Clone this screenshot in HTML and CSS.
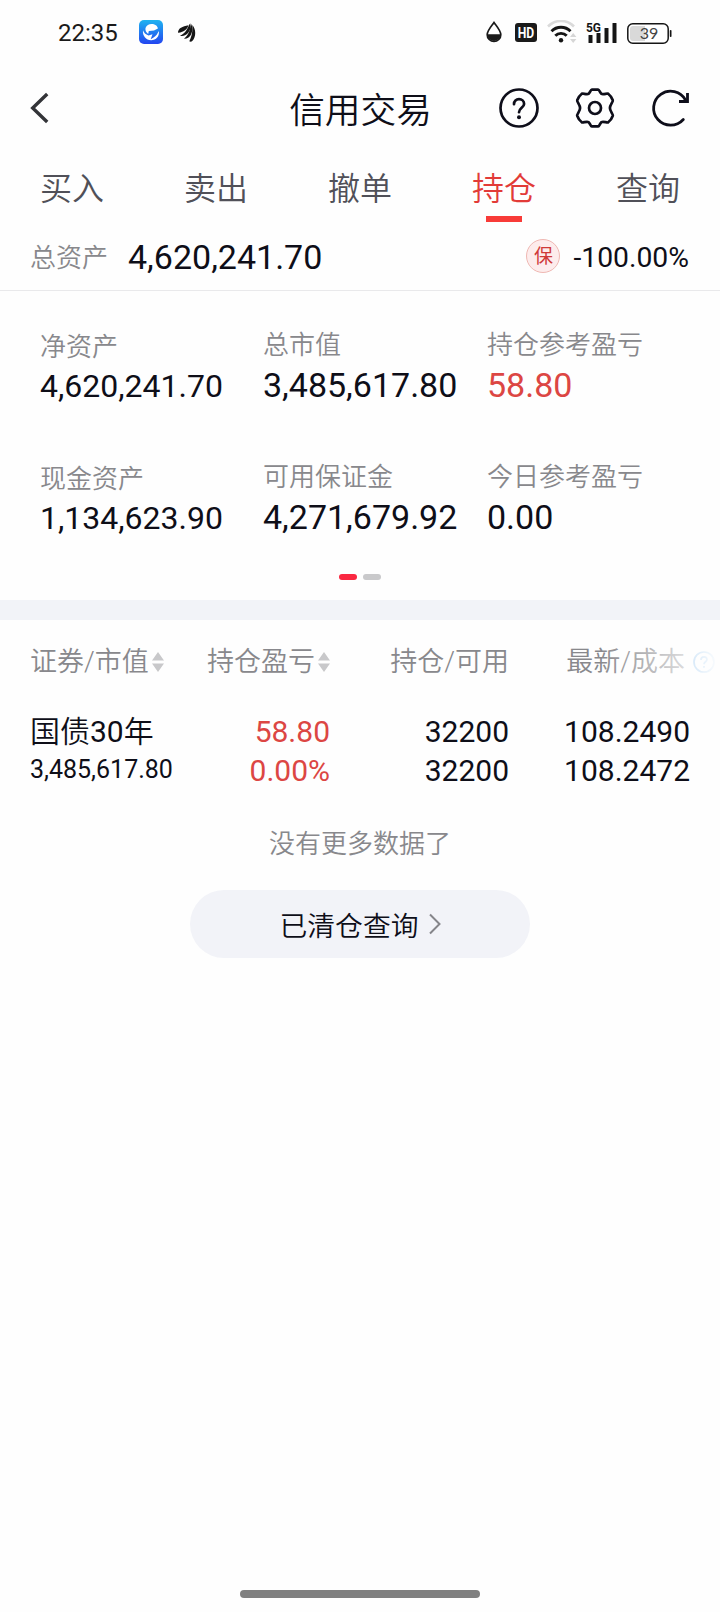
FILE: index.html
```html
<!DOCTYPE html>
<html lang="zh-CN">
<head>
<meta charset="utf-8">
<title>信用交易</title>
<link rel="stylesheet" href="styles.css">
</head>
<body>
<div class="phone">
  <div class="status">
    <span class="time">22:35</span>
    <svg class="app-icon" width="24" height="24" viewBox="0 0 24 24">
      <defs><linearGradient id="app" x1="0" y1="0" x2="0" y2="1"><stop offset="0" stop-color="#1fb4f0"/><stop offset="1" stop-color="#2345f0"/></linearGradient></defs>
      <rect width="24" height="24" rx="5" fill="url(#app)"/>
      <path d="M6.500 8C7.500 5.200 9.800 3.900 12.500 3.900c3.400 0 6 1.700 6.400 4.600L15 10.500l-5.200.6-.6 3C7.300 12.500 6 10.500 6.500 8z" fill="#fff"/>
      <path d="M4 10.300c.9 2.500 2.600 4.300 5.500 5.200l4-1.200-1.800 5 2.500-1.500c3-1.800 4.500-4.300 5.600-6.800 1 5-2.800 9.300-7.700 9.300C7 20.300 3.300 15.800 4 10.300z" fill="#fff"/>
    </svg>
    <svg class="wing-icon" width="18" height="19" viewBox="0 0 18 19" fill="#151515">
      <path d="M0 9.800C-.2 5.500 4 3.300 10.500 2.200 9.500 5.500 6.500 9 0 9.800z"/>
      <path d="M2 12.800C7.500 10.500 9.500 5.500 11.700.8c1.600 3 .5 7-2.200 9.800-2 2-4.500 3-7.500 2.200z"/>
      <path d="M6 15.800C10.500 12 12.500 7 12.700.3c2.400 3.700 2 8.200.1 11.700-1.500 2.500-3.800 4-6.800 3.800z"/>
      <path d="M11.300 18.300c2-4.300 3.600-9 3-16.300 4 4.500 3.700 11.500.2 15.800-.9.900-2.200 1.200-3.200.5z"/>
    </svg>
    <div class="status-right">
      <svg class="drop" width="16" height="22" viewBox="0 0 16 22">
        <path d="M8 1.500C5.500 5 1.200 9.500 1.200 13.700a6.800 6.800 0 0 0 13.600 0C14.800 9.500 10.500 5 8 1.500z" fill="#fff" stroke="#1a1a1a" stroke-width="1.700"/>
        <path d="M1.200 13.200h13.600a6.800 6.800 0 0 1-13.600 0z" fill="#1a1a1a"/>
      </svg>
      <svg class="hd" width="22" height="19" viewBox="0 0 22 19">
        <rect width="22" height="19" rx="3" fill="#1a1a1a"/>
        <text class="hd-text" x="11" y="14.500" text-anchor="middle" textLength="16.500" lengthAdjust="spacingAndGlyphs">HD</text>
      </svg>
      <svg class="wifi" width="30" height="24" viewBox="0 0 30 24" fill="none">
        <path d="M1 6.500a18 18 0 0 1 26 0" stroke="#dadada" stroke-width="2.600"/>
        <path d="M4.500 11.300a13.200 13.200 0 0 1 19 0M8.300 15.800a7.700 7.700 0 0 1 11.400 0" stroke="#151515" stroke-width="2.800"/>
        <circle cx="14" cy="20.200" r="2.200" fill="#151515"/>
        <path d="M23 17l3.200-4 3.200 4zM23 19h6.400l-3.200 4z" fill="#d6d6d6"/>
      </svg>
      <svg class="signal" width="31" height="23" viewBox="0 0 31 23" fill="#151515">
        <text class="g5-text" x="0" y="10.500" textLength="15" lengthAdjust="spacingAndGlyphs">5G</text>
        <rect x="2.500" y="14" width="4" height="8" rx=".5"/><rect x="10.500" y="12" width="4" height="10" rx=".5"/>
        <rect x="18.500" y="7" width="4" height="15" rx=".5"/><rect x="26.500" y="2" width="4" height="20" rx=".5"/>
      </svg>
      <svg class="battery" width="45" height="21" viewBox="0 0 45 21">
        <rect x=".8" y=".8" width="40.400" height="19.400" rx="5" fill="#fff" stroke="#151515" stroke-width="1.500"/>
        <path d="M6 3h12v15H6a3 3 0 0 1-3-3V6a3 3 0 0 1 3-3z" fill="#d9d9d9"/>
        <rect x="42.800" y="7" width="1.700" height="7" rx=".8" fill="#151515"/>
        <text class="bat-text" x="22" y="15.800" text-anchor="middle">39</text>
      </svg>
    </div>
  </div>

  <header class="titlebar">
    <svg width="20" height="32" viewBox="0 0 20 32" fill="none" stroke="#333438" stroke-width="3.400"><path d="M17.200 2L2.700 16l14.500 14"/></svg>
    <h1 class="title">信用交易</h1>
    <div class="actions">
      <svg width="40" height="40" viewBox="0 0 40 40" fill="none" stroke="#0e0e1a" stroke-width="2.700">
        <circle cx="20" cy="20" r="18.500"/><path d="M15 16.200c0-3.200 2.200-5 5-5s5.100 1.900 5.100 4.700c0 3.600-5.100 4.300-5.100 8.300" stroke-linecap="round"/><circle cx="20" cy="29.300" r="2" fill="#0e0e1a" stroke="none"/>
      </svg>
      <svg width="40" height="40" viewBox="0 0 40 40" fill="none" stroke="#0e0e1a" stroke-width="2.700" stroke-linejoin="round">
        <path d="M16.800 1.600h6.400c1.200 0 1.600 3 3.300 4.300 2 1.100 5.600-1 6.700-.2 1.300 1 4 4.900 4.600 6.600.4 1.400-2.900 4.600-2.900 7.700s3.300 6.300 2.900 7.700c-.6 1.700-3.300 5.600-4.600 6.600-1.100.8-4.700-1.300-6.700-.2-1.700 1.300-2.100 4.300-3.300 4.300h-6.400c-1.200 0-1.600-3-3.300-4.300-2-1.100-5.600 1-6.700.2-1.300-1-4-4.900-4.600-6.600-.4-1.400 2.900-4.600 2.900-7.700s-3.300-6.300-2.900-7.700c.6-1.700 3.300-5.600 4.600-6.600 1.100-.8 4.700 1.300 6.700.2 1.700-1.300 2.100-4.300 3.300-4.300z"/>
        <circle cx="20" cy="20" r="6"/>
      </svg>
      <svg width="40" height="40" viewBox="0 0 40 40" fill="none" stroke="#0e0e1a" stroke-width="2.800">
        <path d="M32.300 31.500a17 17 0 1 1 2.200-19.500" stroke-linecap="round"/><path d="M36.500 5v8.500H28"/>
      </svg>
    </div>
  </header>

  <nav class="tabs">
    <span class="tab">买入</span><span class="tab">卖出</span><span class="tab">撤单</span><span class="tab active">持仓</span><span class="tab">查询</span>
  </nav>

  <section class="summary">
    <span class="label total-label">总资产</span>
    <span class="total">4,620,241.70</span>
    <span class="badge">保</span>
    <span class="ratio">-100.00%</span>
  </section>

  <section class="assets">
    <div class="asset small"><div class="label">净资产</div><div class="value">4,620,241.70</div></div>
    <div class="asset"><div class="label">总市值</div><div class="value">3,485,617.80</div></div>
    <div class="asset"><div class="label">持仓参考盈亏</div><div class="value red">58.80</div></div>
    <div class="asset small"><div class="label">现金资产</div><div class="value">1,134,623.90</div></div>
    <div class="asset"><div class="label">可用保证金</div><div class="value">4,271,679.92</div></div>
    <div class="asset"><div class="label">今日参考盈亏</div><div class="value">0.00</div></div>
  </section>
  <div class="pager"><i class="dot on"></i><i class="dot"></i></div>

  <div class="band"></div>

  <section class="holdings">
    <div class="row head">
      <div class="first">证券/市值<svg class="sort" width="12" height="20" viewBox="0 0 12 20" fill="#c8c8ca"><path d="M0 8.500L6 0l6 8.500zM0 11.500h12L6 20z"/></svg></div>
      <div class="num">持仓盈亏<svg class="sort" width="12" height="20" viewBox="0 0 12 20" fill="#c8c8ca"><path d="M0 8.500L6 0l6 8.500zM0 11.500h12L6 20z"/></svg></div>
      <div class="num">持仓/可用</div>
      <div class="num last">最新/成本<svg class="hint" width="22" height="22" viewBox="0 0 22 22" fill="none" stroke="#5aa5e8" stroke-width="1.700"><circle cx="11" cy="11" r="10"/><path d="M8 9c0-2 1.300-3.200 3-3.200s3 1.100 3 2.800c0 2.100-3 2.300-3 4.600"/><path d="M11 15v1.800"/></svg></div>
      <div class="fade"></div>
    </div>
    <div class="row body">
      <div class="first"><div class="line name"><span class="han">国债</span>30<span class="han">年</span></div><div class="line mv">3,485,617.80</div></div>
      <div class="num red"><div class="line">58.80</div><div class="line">0.00%</div></div>
      <div class="num"><div class="line">32200</div><div class="line">32200</div></div>
      <div class="num"><div class="line">108.2490</div><div class="line">108.2472</div></div>
    </div>
  </section>

  <p class="no-more">没有更多数据了</p>
  <div class="closed"><span class="closed-text">已清仓查询</span><svg width="12" height="22" viewBox="0 0 12 22" fill="none" stroke="#85858a" stroke-width="2"><path d="M1 1.500L10.500 11 1 20.500"/></svg></div>

  <div class="home"></div>
</div>
</body>
</html>
```
FILE: styles.css
```css
* { box-sizing: border-box; }
body { margin: 0; background: #fefefe; font-family: Roboto, "Noto Sans CJK SC", sans-serif; font-weight: 400; color: #0e0e18; }
svg { display: block; flex: none; }
.phone { width: 720px; height: 1612px; display: flex; flex-direction: column; overflow: hidden; }

.status { height: 66px; display: flex; align-items: center; padding: 0 48px 2px 58px; }
.time { width: 81px; font-size: 24px; line-height: 30px; color: #1a1a1a; padding-top: 2px; }
.wing-icon { margin-left: 15px; }
.status-right { margin-left: auto; display: flex; align-items: center; }
.hd { margin-left: 13px; }
.wifi { margin-left: 10px; }
.signal { margin-left: 9px; }
.battery { margin-left: 10px; margin-top: 2px; }
.hd-text { font: 700 14px Roboto, sans-serif; fill: #fff; }
.g5-text { font: 700 13px Roboto, sans-serif; }
.bat-text { font: 400 16px Lato, sans-serif; fill: #444; }

/* Chinese text uses the DemiLight cut, digits stay regular */
.title, .tabs, .label, .head, .no-more, .closed, .han { font-weight: 350; }

.titlebar { height: 84px; display: grid; grid-template-columns: 1fr auto 1fr; align-items: center; padding: 0 29px 0 30px; }
.title { margin: 0; font-size: 35.7px; line-height: 44px; padding-top: 6px; }
.actions { display: flex; gap: 36px; justify-content: flex-end; }

.tabs { height: 72px; display: grid; grid-template-columns: repeat(5, 1fr); }
.tab { display: flex; flex-direction: column; align-items: center; font-size: 32px; line-height: 40px; padding-top: 19px; color: #505058; }
.tab.active { color: #e23b38; }
.tab.active::after { content: ""; width: 36px; height: 6px; margin-top: 7px; background: #f83b38; }

.summary { height: 69px; display: flex; align-items: center; padding: 0 31px 0 30px; border-bottom: 1px solid #e9e9eb; }
.label { font-size: 26px; line-height: 32px; color: #88888c; }
.total-label { padding-top: 3px; }
.total { font-size: 34px; line-height: 40px; margin-left: 20px; padding-top: 2px; }
.badge { margin-left: auto; width: 34px; height: 34px; border: 1px solid #efb8b3; border-radius: 50%; background: #fdecec; color: #cf3a38; font-size: 19px; line-height: 33px; text-align: center; }
.ratio { font-size: 28.3px; line-height: 34px; margin-left: 13px; padding-top: 3px; }

.assets { height: 283px; display: grid; grid-template-columns: 223px 224px 1fr; grid-auto-rows: 132px; padding: 38px 0 0 40px; }
.value { font-size: 34px; line-height: 40px; margin-top: 4px; }
.small { padding-top: 2px; }
.small .value { font-size: 32px; line-height: 38px; }
.red { color: #dc4643; }

.pager { height: 26px; display: flex; justify-content: center; gap: 6px; }
.dot { width: 18px; height: 6px; border-radius: 3px; background: #c9c9cb; }
.dot.on { background: #fa2841; }
.band { height: 20px; background: #f2f3f8; }

.row { display: grid; grid-template-columns: 140px 160px 179px 181px; padding: 0 30px; }
.head { position: relative; height: 84px; align-items: center; font-size: 27px; line-height: 34px; color: #88888c; white-space: nowrap; }
.head > .first, .head > .num { display: flex; align-items: center; }
.head > .num { justify-content: flex-end; }
.head > .last { margin-right: -25px; }
.sort { margin-left: 3px; }
.hint { margin-left: 8px; }
.fade { position: absolute; right: 0; top: 0; width: 120px; height: 84px; background: linear-gradient(to right, #fefefe00, #fefefe); }
.body { padding-top: 8px; font-size: 30px; }
.num { text-align: right; }
.line { line-height: 39px; white-space: nowrap; }
.mv { font-size: 25px; line-height: 38px; }

.no-more { margin: 37px 0 0; font-size: 26px; line-height: 34px; text-align: center; color: #88888c; }
.closed { margin: 29px auto 0; width: 340px; height: 68px; border-radius: 34px; background: #f2f3f8; display: flex; align-items: center; justify-content: center; gap: 10px; font-size: 27.8px; line-height: 34px; }
.closed-text { padding-top: 5px; }
.home { width: 240px; height: 8px; border-radius: 4px; background: #808080; margin: auto auto 14px; }
```
